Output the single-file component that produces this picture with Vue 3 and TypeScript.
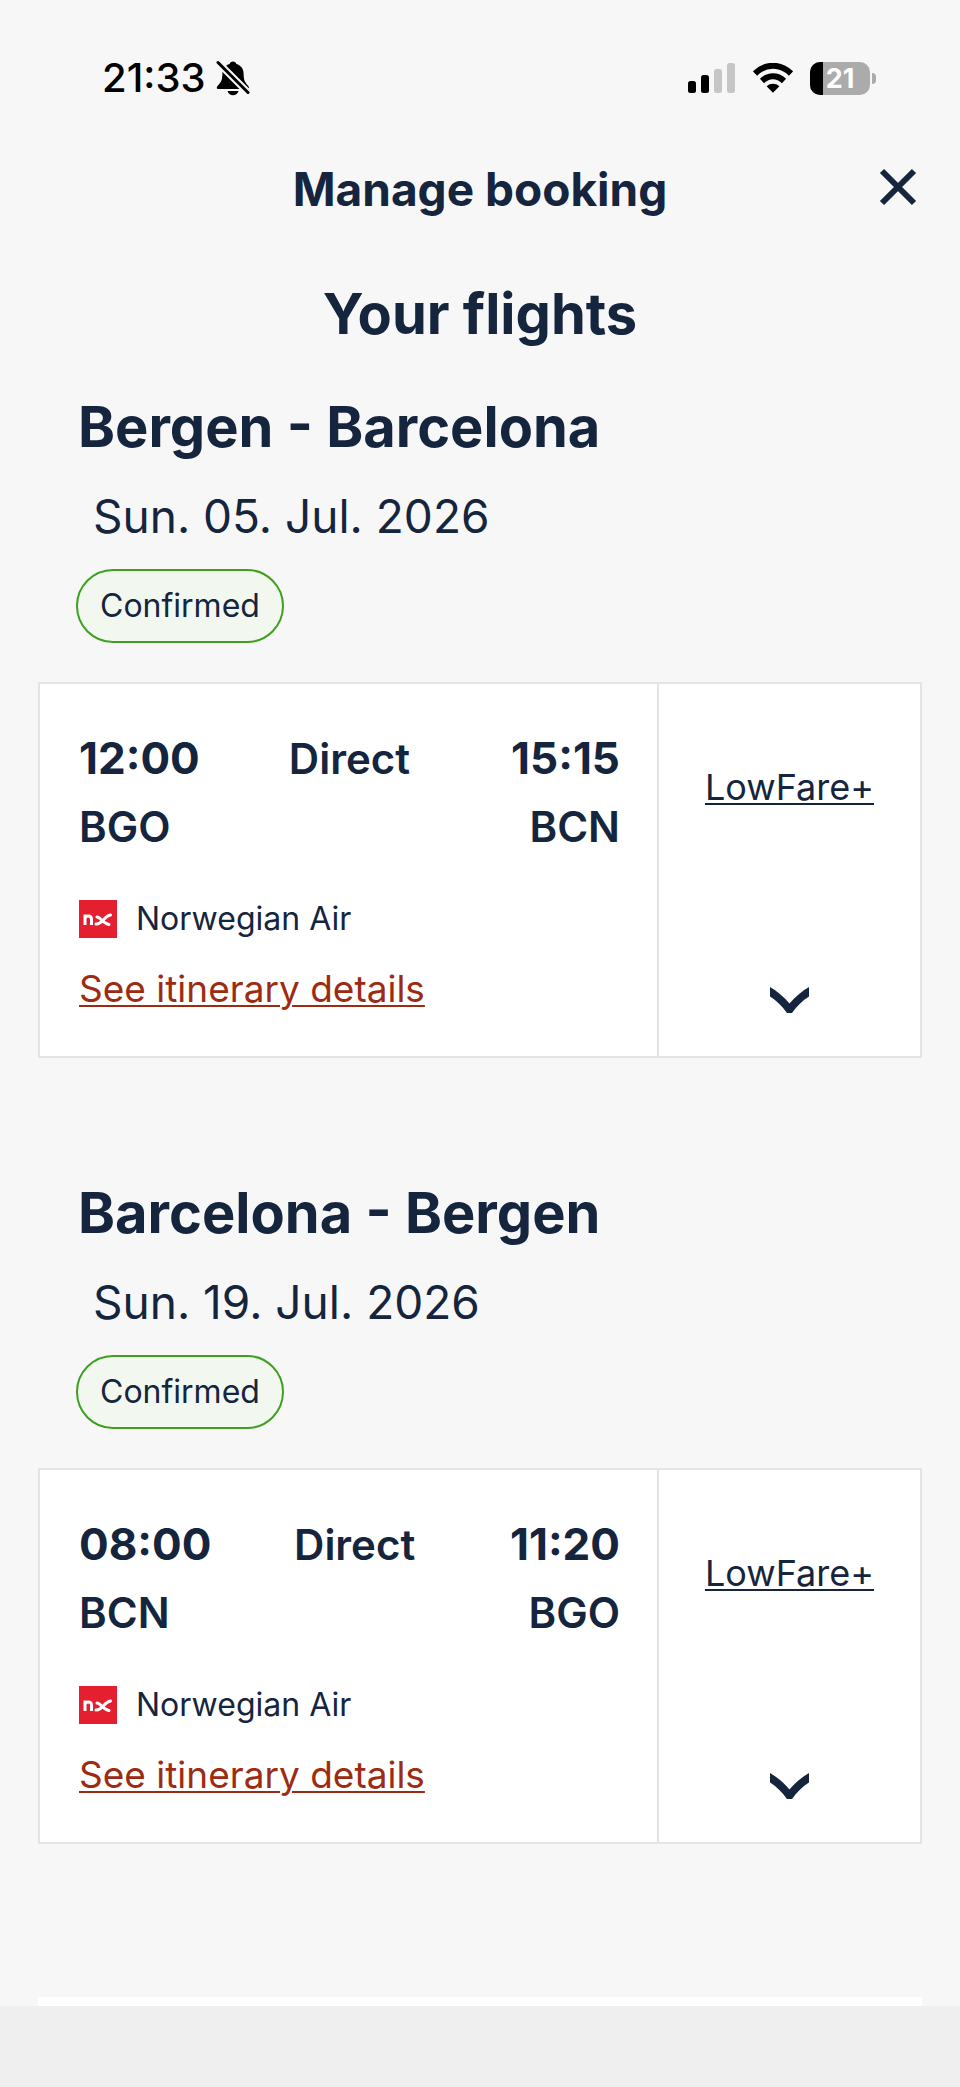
<script setup lang="ts">
interface Stop {
  time: string
  code: string
}

interface Flight {
  id: string
  route: string
  date: string
  status: string
  departure: Stop
  arrival: Stop
  stops: string
  carrier: string
  fare: string
}

const flights: Flight[] = [
  {
    id: 'outbound',
    route: 'Bergen - Barcelona',
    date: 'Sun. 05. Jul. 2026',
    status: 'Confirmed',
    departure: { time: '12:00', code: 'BGO' },
    arrival: { time: '15:15', code: 'BCN' },
    stops: 'Direct',
    carrier: 'Norwegian Air',
    fare: 'LowFare+',
  },
  {
    id: 'return',
    route: 'Barcelona - Bergen',
    date: 'Sun. 19. Jul. 2026',
    status: 'Confirmed',
    departure: { time: '08:00', code: 'BCN' },
    arrival: { time: '11:20', code: 'BGO' },
    stops: 'Direct',
    carrier: 'Norwegian Air',
    fare: 'LowFare+',
  },
]

const battery = 21
</script>

<template>
  <div class="screen">
    <div class="status-bar">
      <div class="clock">
        <span>21:33</span>
        <svg class="bell" viewBox="0 0 34 36" role="img" aria-label="Silent mode">
          <path
            d="M17 1.500c-1.700 0-3 1-3.400 2.500C9 5.300 6.500 9 6.400 13.500c-.1 6-.9 8-3.600 11C1.500 26 .8 26.800 .8 27.800c0 .8.6 1.200 1.500 1.200h29.200c1 0 1.500-.5 1.500-1.200 0-1-.8-1.800-2-3.300-2.500-3-3.300-5-3.400-11C27.500 9 25 5.300 20.400 4 20 2.500 18.700 1.500 17 1.500z"
          />
          <path d="M11.500 31h11c-.6 2.600-2.800 4.200-5.500 4.200S12.100 33.600 11.500 31z" />
          <path class="bell-gap" d="M2 2.500 32 32.500" />
          <path class="bell-slash" d="M2 2.500 32 32.500" />
        </svg>
      </div>
      <div class="indicators">
        <svg class="signal" viewBox="0 0 48 32" role="img" aria-label="Signal strength">
          <rect x="0" y="19" width="8" height="12" rx="2.500" />
          <rect x="13" y="13" width="8" height="18" rx="2.500" />
          <rect class="faint" x="26" y="7" width="8" height="24" rx="2.500" />
          <rect class="faint" x="39" y="1" width="8" height="30" rx="2.500" />
        </svg>
        <svg class="wifi" viewBox="0 0 40 30" role="img" aria-label="Wi-Fi">
          <path class="wave" d="M2 10.500C12.500 .2 27.500 .2 38 10.500" />
          <path class="wave" d="M9 18c6.600-6.200 15.400-6.200 22 0" />
          <path d="M20 29.800 13.600 23.200c3.600-3.300 9.200-3.300 12.800 0z" />
        </svg>
        <div class="battery">
          <div class="cell">
            <span class="charge" :style="{ width: battery + '%' }"></span>
            <span class="level">{{ battery }}</span>
          </div>
          <span class="nub"></span>
        </div>
      </div>
    </div>

    <header class="header">
      <p class="header-title">Manage booking</p>
      <button class="close" type="button" aria-label="Close">
        <svg viewBox="0 0 44 44" aria-hidden="true"><path d="M6 6 38 38M38 6 6 38" /></svg>
      </button>
    </header>

    <main>
      <h1>Your flights</h1>
      <section v-for="flight in flights" :key="flight.id" class="flight">
        <div class="intro">
          <h2>{{ flight.route }}</h2>
          <p class="date">{{ flight.date }}</p>
          <span class="status">{{ flight.status }}</span>
        </div>
        <article class="card">
          <div class="details">
            <div class="row times">
              <span class="time">{{ flight.departure.time }}</span>
              <span class="stops">{{ flight.stops }}</span>
              <span class="time">{{ flight.arrival.time }}</span>
            </div>
            <div class="row codes">
              <span>{{ flight.departure.code }}</span>
              <span>{{ flight.arrival.code }}</span>
            </div>
            <div class="carrier">
              <svg class="logo" viewBox="0 0 38 38" aria-hidden="true">
                <rect width="38" height="38" />
                <path class="mark" d="M6 25V14.500M6 18.500c.5-3.500 6.500-3.500 6.500 .5V25" />
                <path class="mark tail" d="M18 17c3 0 6.500 6.500 12 7.500" />
                <path class="mark tail" d="M17 24c6.500 .5 8-8 14.500-9" />
              </svg>
              <span>{{ flight.carrier }}</span>
            </div>
            <a class="itinerary" href="#">See itinerary details</a>
          </div>
          <div class="fare">
            <a class="fare-link" href="#">{{ flight.fare }}</a>
            <button class="expand" type="button" aria-label="Show fare details">
              <svg viewBox="0 0 39 26" aria-hidden="true">
                <path d="M0 0C7 4 13.500 9.500 19.500 16.500 25.500 9.500 32 4 39 0v9.500C32.500 13.500 27 19 22 26h-5C12 19 6.500 13.500 0 9.500z" />
              </svg>
            </button>
          </div>
        </article>
      </section>
    </main>

    <div class="next-panel"></div>
    <footer class="browser-bar"></footer>
  </div>
</template>

<style>
body {
  margin: 0;
  background: #f7f7f7;
}
</style>

<style scoped>
.screen {
  display: flex;
  flex-direction: column;
  min-height: 100vh;
  background: #f7f7f7;
  color: #15253d;
  font-family: Inter, "Liberation Sans", sans-serif;
}

p,
h1,
h2 {
  margin: 0;
}

svg {
  display: block;
}

button {
  padding: 0;
  border: 0;
  background: none;
  color: inherit;
  cursor: pointer;
}

.status-bar {
  display: flex;
  justify-content: space-between;
  align-items: center;
  height: 48px;
  padding: 54px 84px 0 102px;
  color: #000;
}

.clock {
  display: flex;
  align-items: center;
  gap: 10px;
  font-size: 40px;
  font-weight: 500;
  line-height: 48px;
}

.bell {
  width: 34px;
  height: 36px;
}

.bell-gap,
.bell-slash {
  fill: none;
  stroke-linecap: round;
}

.bell-gap {
  stroke: #f7f7f7;
  stroke-width: 7;
}

.bell-slash {
  stroke: #000;
  stroke-width: 3;
}

.indicators {
  display: flex;
  align-items: center;
  gap: 17px;
}

.signal {
  width: 48px;
  height: 32px;
}

.faint {
  fill: #c6c6c6;
}

.wifi {
  width: 40px;
  height: 30px;
}

.wave {
  fill: none;
  stroke: #000;
  stroke-width: 6;
}

.battery {
  display: flex;
  align-items: center;
  gap: 2px;
}

.cell {
  position: relative;
  width: 60px;
  height: 33px;
  border-radius: 10px;
  background: #ababab;
  overflow: hidden;
}

.charge {
  position: absolute;
  inset: 0 auto 0 0;
  background: #000;
}

.level {
  position: absolute;
  inset: 0;
  color: #fff;
  font-size: 27px;
  font-weight: 700;
  line-height: 33px;
  text-align: center;
}

.nub {
  width: 4px;
  height: 11px;
  border-radius: 0 4px 4px 0;
  background: #ababab;
}

.header {
  display: grid;
  grid-template-columns: 1fr auto 1fr;
  align-items: center;
  min-height: 58px;
  margin-top: 58px;
  padding: 0 40px;
}

.header-title {
  grid-column: 2;
  font-size: 46px;
  font-weight: 700;
  line-height: 56px;
}

.close {
  justify-self: end;
  width: 44px;
  padding-bottom: 4px;
}

.close svg {
  width: 44px;
  height: 44px;
  fill: none;
  stroke: currentColor;
  stroke-width: 6;
}

h1 {
  margin-top: 64px;
  font-size: 56px;
  font-weight: 700;
  line-height: 64px;
  text-align: center;
}

.flight {
  margin: 49px 38px 0;
}

.flight + .flight {
  margin-top: 123px;
}

.intro {
  padding: 0 38px;
}

h2 {
  padding-left: 2px;
  font-size: 56px;
  font-weight: 700;
  line-height: 64px;
}

.date {
  margin-top: 29px;
  padding-left: 17px;
  font-size: 46px;
  line-height: 56px;
}

.status {
  display: block;
  width: fit-content;
  margin-top: 25px;
  padding: 0 22px;
  border: 2px solid #3ea01f;
  border-radius: 37px;
  background: #f2f8ef;
  font-size: 32px;
  line-height: 70px;
}

.card {
  display: grid;
  grid-template-columns: 1fr 261px;
  margin-top: 39px;
  border: 2px solid #e6e4e3;
  background: #fff;
}

.details {
  padding: 50px 37px 45px 39px;
  border-right: 2px solid #e6e4e3;
}

.row {
  display: flex;
  justify-content: space-between;
  align-items: baseline;
  height: 48px;
  line-height: 48px;
}

.time {
  font-size: 44px;
  font-weight: 700;
}

.stops,
.codes {
  font-size: 42px;
  font-weight: 600;
}

.stops {
  margin-right: 12px;
}

.codes {
  margin-top: 21px;
}

.carrier {
  display: flex;
  align-items: center;
  gap: 19px;
  margin-top: 49px;
  font-size: 32px;
  line-height: 38px;
}

.logo {
  width: 38px;
  height: 38px;
  fill: #e41f30;
}

.mark {
  fill: none;
  stroke: #fff;
  stroke-width: 3;
}

.tail {
  stroke-linecap: round;
}

.itinerary,
.fare-link {
  line-height: 44px;
  text-decoration-thickness: 2px;
  text-underline-offset: 3px;
}

.itinerary {
  display: block;
  width: fit-content;
  margin-top: 29px;
  color: #9d2b12;
  font-size: 37px;
}

.fare {
  display: flex;
  flex-direction: column;
  justify-content: space-between;
  align-items: center;
  padding: 81px 0 43px;
}

.fare-link {
  color: inherit;
  font-size: 36px;
}

.expand svg {
  width: 39px;
  height: 26px;
  fill: currentColor;
}

.next-panel {
  height: 9px;
  margin: 153px 38px 0;
  background: #fff;
}

.browser-bar {
  flex: 1;
  min-height: 81px;
  background: #efefef;
}
</style>
